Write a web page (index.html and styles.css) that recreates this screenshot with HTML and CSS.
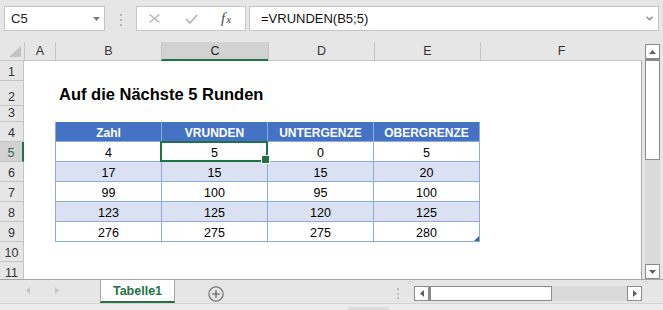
FILE: index.html
```html
<!DOCTYPE html>
<html lang="de">
<head>
<meta charset="utf-8">
<title>Auf die Nächste 5 Runden</title>
<link rel="stylesheet" href="styles.css">
</head>
<body>
<div class="app">
  <div class="fbar">
    <div class="namebox">
      <span class="nb-text">C5</span>
      <svg class="nb-caret" width="7" height="4" viewBox="0 0 7 4"><polygon points="0,0 7,0 3.5,4" fill="#7a7a7a"/></svg>
    </div>
    <div class="fdots"><i></i><i></i><i></i></div>
    <div class="fbtns">
      <svg class="ic-x" width="11" height="9" viewBox="0 0 11 9"><path d="M0.5 0.5L10.5 8.5M10.5 0.5L0.5 8.5" stroke="#b4b4b4" stroke-width="1.3" fill="none"/></svg>
      <svg class="ic-check" width="13" height="10" viewBox="0 0 13 10"><path d="M1 5L5 9L12 1" stroke="#b4b4b4" stroke-width="1.7" fill="none"/></svg>
      <span class="fx"><span class="fx-f">f</span><span class="fx-x">x</span></span>
    </div>
    <div class="finput">
      <span class="fi-text">=VRUNDEN(B5;5)</span>
      <svg class="fi-chev" width="7" height="5" viewBox="0 0 7 5"><path d="M0.5 0.8L3.5 3.8L6.5 0.8" stroke="#8a8a8a" stroke-width="1.5" fill="none"/></svg>
    </div>
  </div>

  <div class="main">
    <div class="sheet">
      <div class="colheads">
        <div class="ch corner"><svg width="24" height="18" viewBox="0 0 24 18"><polygon points="21,4 21,15 9,15" fill="#c2c2c2"/></svg></div>
        <div class="ch w-a">A</div>
        <div class="ch w-b">B</div>
        <div class="ch w-c sel">C</div>
        <div class="ch w-d">D</div>
        <div class="ch w-e">E</div>
        <div class="ch w-f">F</div>
      </div>
      <div class="body">
        <div class="rowheads">
          <div class="rh">1</div>
          <div class="rh tall">2</div>
          <div class="rh short">3</div>
          <div class="rh">4</div>
          <div class="rh sel">5</div>
          <div class="rh">6</div>
          <div class="rh">7</div>
          <div class="rh">8</div>
          <div class="rh">9</div>
          <div class="rh">10</div>
          <div class="rh">11</div>
        </div>
        <div class="cells">
          <div class="row1"></div>
          <div class="title-row">Auf die Nächste 5 Runden</div>
          <div class="row3"></div>
          <div class="dtable">
            <div class="td th">Zahl</div>
            <div class="td th">VRUNDEN</div>
            <div class="td th">UNTERGENZE</div>
            <div class="td th">OBERGRENZE</div>

            <div class="td">4</div>
            <div class="td sel">5</div>
            <div class="td">0</div>
            <div class="td">5</div>

            <div class="td alt">17</div>
            <div class="td alt">15</div>
            <div class="td alt">15</div>
            <div class="td alt">20</div>

            <div class="td">99</div>
            <div class="td">100</div>
            <div class="td">95</div>
            <div class="td">100</div>

            <div class="td alt">123</div>
            <div class="td alt">125</div>
            <div class="td alt">120</div>
            <div class="td alt">125</div>

            <div class="td">276</div>
            <div class="td">275</div>
            <div class="td">275</div>
            <div class="td last">280</div>
          </div>
        </div>
      </div>
    </div>
    <div class="vscroll">
      <div class="sbtn"><svg width="7" height="4" viewBox="0 0 7 4"><polygon points="0,4 7,4 3.5,0" fill="#5f5f5f"/></svg></div>
      <div class="vthumb"></div>
      <div class="vtrack"></div>
      <div class="sbtn"><svg width="7" height="4" viewBox="0 0 7 4"><polygon points="0,0 7,0 3.5,4" fill="#5f5f5f"/></svg></div>
    </div>
  </div>

  <div class="tabbar">
    <div class="tabnav">
      <svg class="nav-l" width="4" height="7" viewBox="0 0 4 7"><polygon points="4,0 4,7 0,3.5" fill="#c4c4c4"/></svg>
      <svg class="nav-r" width="4" height="7" viewBox="0 0 4 7"><polygon points="0,0 0,7 4,3.5" fill="#c4c4c4"/></svg>
    </div>
    <div class="tab">Tabelle1</div>
    <svg class="addsheet" width="16" height="16" viewBox="0 0 16 16"><circle cx="8" cy="8" r="7.1" stroke="#7c7c7c" stroke-width="1.3" fill="none"/><path d="M4.2 8H11.8M8 4.2V11.8" stroke="#7c7c7c" stroke-width="1.7"/></svg>
    <div class="spacer"></div>
    <div class="hdots"><i></i><i></i><i></i></div>
    <div class="hscroll">
      <div class="hbtn"><svg width="4" height="7" viewBox="0 0 4 7"><polygon points="4,0 4,7 0,3.5" fill="#5f5f5f"/></svg></div>
      <div class="hthumb"></div>
      <div class="htrack"></div>
      <div class="hbtn"><svg width="4" height="7" viewBox="0 0 4 7"><polygon points="0,0 0,7 4,3.5" fill="#5f5f5f"/></svg></div>
    </div>
  </div>
  <div class="status"><div class="status-patch"></div></div>
</div>
</body>
</html>
```

FILE: styles.css
```css
* {
  box-sizing: border-box;
  margin: 0;
  padding: 0;
}

html, body {
  width: 663px;
  height: 310px;
  overflow: hidden;
}

body {
  background: #e6e6e6;
  font-family: "Liberation Sans", Arial, sans-serif;
  color: #000;
}

.app {
  display: flex;
  flex-direction: column;
  width: 663px;
  height: 310px;
}

/* ---------- formula bar ---------- */
.fbar {
  height: 42px;
  flex-shrink: 0;
  display: flex;
  align-items: flex-start;
  padding: 6px 0 0 4px;
}

.namebox {
  width: 101px;
  height: 25px;
  background: #fff;
  border: 1px solid #c6c6c6;
  display: flex;
  align-items: center;
  padding-left: 6px;
  font-size: 13px;
  color: #222;
}

.nb-text { flex: 1; }
.nb-caret { margin-right: 4px; }

.fdots {
  width: 3px;
  margin-left: 15px;
  padding-top: 8px;
  display: flex;
  flex-direction: column;
  gap: 3px;
}

.fdots i, .hdots i {
  display: block;
  width: 2px;
  height: 2px;
  background: #b4b4b4;
}

.fbtns {
  margin-left: 13px;
  width: 110px;
  height: 25px;
  background: #fff;
  border: 1px solid #c6c6c6;
  display: flex;
  align-items: center;
  padding-left: 12px;
}

.ic-check { margin-left: 25px; }

.fx {
  margin-left: 23px;
  font-family: "Liberation Serif", "Times New Roman", serif;
  font-style: italic;
  color: #4a4a4a;
  display: flex;
  align-items: baseline;
}

.fx-f { font-size: 15px; }
.fx-x { font-size: 11px; margin-left: 1px; }

.finput {
  margin-left: 3px;
  width: 410px;
  height: 25px;
  background: #fff;
  border: 1px solid #c6c6c6;
  display: flex;
  align-items: center;
  padding-left: 11px;
  font-size: 13px;
  color: #111;
}

.fi-text { flex: 1; }
.fi-chev { margin-right: 5px; }

/* ---------- main sheet ---------- */
.main {
  height: 237px;
  flex-shrink: 0;
  display: flex;
}

.sheet {
  width: 642px;
  display: flex;
  flex-direction: column;
  overflow: hidden;
}

.colheads {
  height: 19px;
  flex-shrink: 0;
  display: flex;
  background: #e6e6e6;
}

.ch {
  height: 19px;
  border-left: 1px solid #c4c4c4;
  border-bottom: 1px solid #c4c4c4;
  display: flex;
  align-items: center;
  justify-content: center;
  font-size: 12.5px;
  line-height: 14px;
  color: #333;
}

.ch.corner {
  width: 24px;
  border-left: none;
  align-items: flex-start;
}

.w-a { width: 31px; }
.w-b { width: 106px; }
.w-c { width: 107px; }
.w-d { width: 106px; }
.w-e { width: 106px; }
.w-f { width: 162px; }

.ch.sel {
  background: #d2d2d2;
  border-bottom: 2px solid #217346;
  padding-top: 1px;
  color: #222;
}

.body {
  flex: 1;
  min-height: 0;
  display: flex;
  overflow: hidden;
}

.rowheads {
  width: 24px;
  flex-shrink: 0;
  display: flex;
  flex-direction: column;
  background: #e6e6e6;
}

.rh {
  height: 20px;
  flex-shrink: 0;
  border-bottom: 1px solid #c4c4c4;
  border-right: 1px solid #c4c4c4;
  display: flex;
  align-items: flex-end;
  justify-content: center;
  padding-bottom: 1px;
  font-size: 12.5px;
  line-height: 14px;
  color: #333;
}

.rh.tall { height: 25px; }
.rh.short { height: 16px; }

.rh.sel {
  background: #d2d2d2;
  border-right: 2px solid #217346;
  color: #2f6a4b;
}

.cells {
  flex: 1;
  background: #fff;
  border-right: 1px solid #a6a6a6;
  display: flex;
  flex-direction: column;
}

.row1 { height: 20px; flex-shrink: 0; }
.row3 { height: 16px; flex-shrink: 0; }

.title-row {
  height: 25px;
  flex-shrink: 0;
  display: flex;
  align-items: flex-end;
  padding: 0 0 2px 35px;
  font-size: 16.5px;
  line-height: 19px;
  font-weight: bold;
}

.dtable {
  margin-left: 31px;
  width: 425px;
  border-left: 1px solid #8ea9db;
  display: grid;
  grid-template-columns: 106px 106px 106px 106px;
  grid-auto-rows: 20px;
}

.td {
  border-right: 1px solid #8ea9db;
  border-bottom: 1px solid #8ea9db;
  display: flex;
  align-items: flex-end;
  justify-content: center;
  padding-bottom: 1px;
  font-size: 12.5px;
  line-height: 14px;
  color: #000;
}

.td.th {
  background: #4472c4;
  color: #fff;
  font-weight: bold;
  font-size: 12px;
}

.td.alt { background: #d9e1f2; }

.td.sel { position: relative; }

.td.sel::before {
  content: "";
  position: absolute;
  left: -2px;
  top: -1px;
  right: -1px;
  bottom: -1px;
  border: 2px solid #217346;
}

.td.sel::after {
  content: "";
  position: absolute;
  right: -3px;
  bottom: -3px;
  width: 7px;
  height: 7px;
  background: #217346;
  border: 1px solid #fff;
}

.td.last { position: relative; }

.td.last::after {
  content: "";
  position: absolute;
  right: 0;
  bottom: 0;
  width: 0;
  height: 0;
  border-left: 5px solid transparent;
  border-bottom: 5px solid #3d64b0;
}

/* ---------- vertical scrollbar ---------- */
.vscroll {
  margin-left: 3px;
  width: 15px;
  padding-top: 2px;
  display: flex;
  flex-direction: column;
}

.sbtn {
  height: 15px;
  flex-shrink: 0;
  background: #fff;
  border: 1px solid #8a8a8a;
  display: flex;
  align-items: center;
  justify-content: center;
}

.vthumb {
  height: 101px;
  flex-shrink: 0;
  background: #fff;
  border: 1px solid #8a8a8a;
  border-top: 2px solid #8a8a8a;
}

.vtrack {
  flex: 1;
  background: #dadada;
}

/* ---------- tab bar ---------- */
.tabbar {
  height: 24px;
  flex-shrink: 0;
  display: flex;
  align-items: flex-start;
  border-top: 1px solid #a6a6a6;
  background: #e6e6e6;
}

.tabnav {
  width: 100px;
  height: 23px;
  display: flex;
  align-items: center;
  padding: 0 0 2px 26px;
}

.nav-r { margin-left: 25px; }

.tab {
  width: 75px;
  height: 24px;
  margin-top: -1px;
  background: #fff;
  border-left: 1px solid #a6a6a6;
  border-right: 1px solid #a6a6a6;
  border-top: 1px solid #a6a6a6;
  border-bottom: 2px solid #217346;
  display: flex;
  align-items: center;
  justify-content: center;
  padding-top: 1px;
  font-size: 12.5px;
  font-weight: bold;
  color: #217346;
}

.addsheet {
  margin: 6px 0 0 33px;
}

.spacer { flex: 1; }

.hdots {
  width: 2px;
  margin-top: 8px;
  display: flex;
  flex-direction: column;
  gap: 2.5px;
}

.hdots i { background: #bcbcbc; }

.hscroll {
  width: 228px;
  height: 15px;
  margin: 6px 21px 0 15px;
  display: flex;
}

.hbtn {
  width: 15px;
  height: 15px;
  flex-shrink: 0;
  background: #fff;
  border: 1px solid #8a8a8a;
  display: flex;
  align-items: center;
  justify-content: center;
}

.hthumb {
  width: 123px;
  flex-shrink: 0;
  background: #fff;
  border: 1px solid #8a8a8a;
  border-left: 2px solid #8a8a8a;
}

.htrack {
  flex: 1;
  background: #dadada;
}

.status {
  flex: 1;
  border-top: 1px solid #d4d4d4;
  background: #ececec;
  padding: 3px 0 0 348px;
}

.status-patch {
  width: 41px;
  height: 4px;
  background: #dcdcdc;
}
```
